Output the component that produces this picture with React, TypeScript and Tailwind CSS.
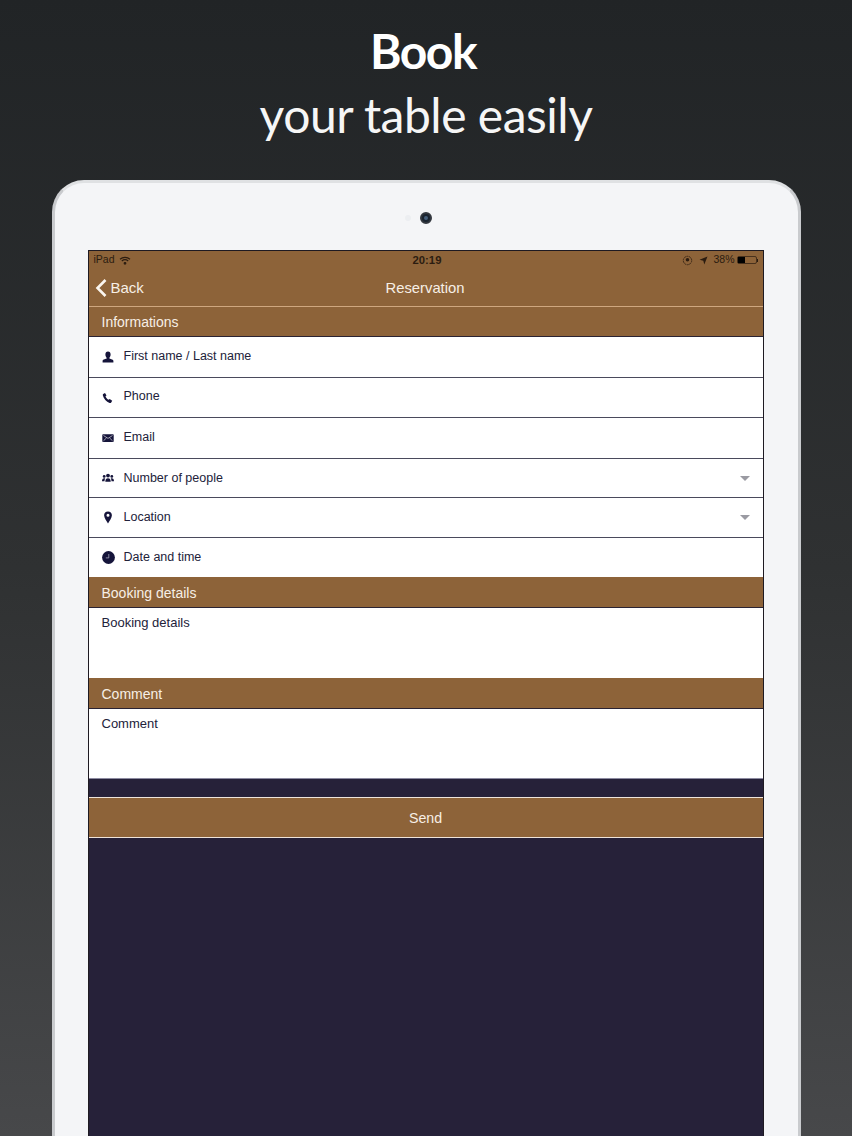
import React from 'react';

const sans = "font-['Liberation_Sans',Arial,sans-serif]";

const UserGlyph = () => (
  <svg width="12" height="12" viewBox="0 0 12 12" fill="#15143a">
    <path d="M6 0.500c1.700 0 2.600 1.200 2.600 2.900 0 1.200-.5 2.300-1.100 3v1.200c0 .5 3.700.9 3.900 2.100v1.800H.6V9.700c.2-1.200 3.900-1.600 3.900-2.100V6.400C3.900 5.700 3.400 4.600 3.400 3.400 3.400 1.700 4.300.5 6 .5z" />
  </svg>
);

const PhoneGlyph = () => (
  <svg width="12" height="12" viewBox="0 0 12 12" fill="#15143a">
    <path d="M1.200 1.900 3 .9l1.500 2.500-1 .8c.4 1.500 1.600 2.900 3.200 3.600l1-.9 2.500 1.900-1 1.700c-.3.500-1 .6-1.600.4C4.300 9.900 1.700 7 .8 3.300c-.1-.6 0-1.100.4-1.400z" />
  </svg>
);

const MailGlyph = () => (
  <svg width="12" height="12" viewBox="0 0 12 12">
    <rect x="0.300" y="2.200" width="11.400" height="7.800" rx="0.800" fill="#15143a" />
    <path d="M1.500 3.500 6 6.400l4.500-2.900M1.500 8.800l3-2.900M10.500 8.800l-3-2.900" stroke="#fff" strokeWidth="0.600" fill="none" />
  </svg>
);

const GroupGlyph = () => (
  <svg width="12" height="12" viewBox="0 0 12 12" fill="#15143a">
    <circle cx="6" cy="3.600" r="1.900" />
    <path d="M3.300 9.800c0-2.500 1-3.600 2.700-3.600s2.700 1.100 2.700 3.600z" />
    <circle cx="2.200" cy="4.400" r="1.400" />
    <path d="M0 9.300c0-2 .8-3 2.200-3 .4 0 .7.100 1 .2-.5.700-.7 1.600-.7 2.800z" />
    <circle cx="9.800" cy="4.400" r="1.400" />
    <path d="M12 9.300c0-2-.8-3-2.200-3-.4 0-.7.100-1 .2.500.7.700 1.600.7 2.800z" />
  </svg>
);

const PinGlyph = () => (
  <svg width="12" height="13" viewBox="0 0 12 13" fill="#15143a">
    <path fillRule="evenodd" d="M6 .4c2.300 0 3.900 1.700 3.900 3.800C9.900 6.800 7.400 10 6 12.600 4.600 10 2.100 6.800 2.100 4.200 2.100 2.100 3.700.4 6 .4zm0 2.300a1.500 1.500 0 1 0 0 3 1.500 1.500 0 0 0 0-3z" />
  </svg>
);

const ClockGlyph = () => (
  <svg width="13" height="13" viewBox="0 0 13 13">
    <circle cx="6.500" cy="6.500" r="6.400" fill="#15143a" />
    <path d="M6.800 3v3.900H3.800" stroke="#b9b9cc" strokeWidth="0.700" fill="none" />
  </svg>
);

const BackChevron = () => (
  <svg width="12" height="18" viewBox="0 0 12 18" fill="none" stroke="#fbf6ef" strokeWidth="2.600">
    <path d="M10.500 1 2.500 9l8 8" />
  </svg>
);

const SectionHeader = ({ label, h }: { label: string; h: string }) => (
  <div className={`${h} bg-[#8d6339] border-b border-[#2a2333] pl-[13px] pt-[2px] flex items-center text-[14px] text-[#f7efe6]`}>
    {label}
  </div>
);

const FieldRow = ({ icon, label, select, last, h, nudge }: { icon: React.ReactNode; label: string; select?: boolean; last?: boolean; h: string; nudge?: string }) => (
  <div className={`${h} bg-white flex items-center pl-[13px] pr-[13px] ${last ? '' : 'border-b border-[#4a4a5c]'}`}>
    <span className="w-[13px] flex justify-center">{icon}</span>
    <span className={`ml-[9px] text-[12.500px] text-[#22223a] ${nudge ?? ''}`}>{label}</span>
    {select && <span className="ml-auto w-0 h-0 border-x-[5px] border-x-transparent border-t-[5px] border-t-[#9a9aa2]" />}
  </div>
);

export default function App() {
  return (
    <div className="w-[852px] h-[1136px] overflow-hidden bg-gradient-to-b from-[#212426] via-[#2f3132] to-[#47484a] flex flex-col items-center">
      <div className="h-[180px] w-full pt-[21px] flex flex-col items-center text-white font-['Lato',sans-serif]">
        <h1 className="text-[48px] leading-[60px] font-bold tracking-[-1.500px] pr-[6px]">Book</h1>
        <p className="text-[48px] leading-[68px] font-normal tracking-[-0.500px] text-[#f6f6f6]">your table easily</p>
      </div>

      <div className="w-[749px] flex-1 rounded-t-[32px] bg-[#f4f5f7] border-t-[3px] border-x-[3px] border-t-[#dfe1e3] border-x-[#c9cbce] flex flex-col items-center">
        <div className="h-[67px] w-full flex items-center justify-center pt-[3px] pr-[16px] gap-[9px]">
          <span className="w-[6px] h-[6px] rounded-full bg-[#eceef1]" />
          <span className="w-[12px] h-[12px] rounded-full bg-[#1a2430] border-[2px] border-[#33383f] flex items-center justify-center">
            <span className="w-[4px] h-[4px] rounded-full bg-[#46607c]" />
          </span>
        </div>

        <div className={`w-[676px] flex-1 mr-[1px] bg-[#262139] border-x border-t border-[#1e1a22] flex flex-col ${sans}`}>
          {/* status bar + nav */}
          <div className="bg-[#8d6339] border-b border-[#cfa77f]">
            <div className="h-[18px] flex items-center px-[5px] text-[10.500px] text-[#2b1c10] relative">
              <span>iPad</span>
              <svg className="ml-[4px]" width="12" height="9" viewBox="0 0 12 9" fill="none" stroke="#2b1c10" strokeWidth="1.200">
                <path d="M1 3.200c2.800-2.400 7.200-2.400 10 0M2.800 5c1.800-1.500 4.600-1.500 6.400 0" />
                <circle cx="6" cy="7.300" r="0.800" fill="#2b1c10" />
              </svg>
              <span className="absolute left-0 right-0 text-center font-bold text-[11.300px] pl-[3px]">20:19</span>
              <span className="ml-auto flex items-center">
                <svg width="11" height="11" viewBox="0 0 11 11" fill="none" stroke="#2b1c10">
                  <circle cx="5.500" cy="5.500" r="4.200" strokeWidth="0.800" strokeDasharray="2 0.600" />
                  <circle cx="5.500" cy="4.800" r="1.800" fill="#2b1c10" stroke="none" />
                </svg>
                <svg className="ml-[6px]" width="9" height="9" viewBox="0 0 9 9" fill="#2b1c10">
                  <path d="M8.500.5 5.300 8.500 4.300 4.700.5 3.700z" />
                </svg>
                <span className="ml-[5px]">38%</span>
                <span className="ml-[2px] w-[20px] h-[8px] border border-[#2b1c10]/70 rounded-[2px] flex">
                  <span className="w-[7px] bg-black" />
                </span>
                <span className="w-[1px] h-[3px] bg-[#2b1c10]" />
              </span>
            </div>
            <div className="h-[37px] flex items-center relative pl-[6px]">
              <BackChevron />
              <span className="ml-[4px] pt-[1px] text-[15px] text-[#f7efe6]">Back</span>
              <span className="absolute left-0 right-0 text-center text-[14.800px] text-[#f7efe6] pr-[1px] pt-[1px]">Reservation</span>
            </div>
          </div>

          <SectionHeader h="h-[30px]" label="Informations" />
          <FieldRow h="h-[41px]" icon={<UserGlyph />} label="First name / Last name" nudge="pb-[2px]" />
          <FieldRow h="h-[40px]" icon={<PhoneGlyph />} label="Phone" nudge="pb-[2px]" />
          <FieldRow h="h-[41px]" icon={<MailGlyph />} label="Email" nudge="pb-[2px]" />
          <FieldRow h="h-[39px]" icon={<GroupGlyph />} label="Number of people" select nudge="pt-[1px]" />
          <FieldRow h="h-[40px]" icon={<PinGlyph />} label="Location" select />
          <FieldRow h="h-[39px]" icon={<ClockGlyph />} label="Date and time" last />

          <SectionHeader h="h-[31px]" label="Booking details" />
          <div className="h-[70px] bg-white pl-[13px] pt-[5px] text-[13px] text-[#22223a]">Booking details</div>
          <SectionHeader h="h-[31px]" label="Comment" />
          <div className="h-[70px] bg-white pl-[13px] pt-[5px] text-[13px] text-[#22223a] border-b border-[#8c8aa0]">Comment</div>

          <div className="mt-[18px] h-[41px] bg-[#8d6339] border-y border-[#efe4da] flex items-center justify-center text-[14.200px] text-[#f7efe6] pt-[3px]">
            Send
          </div>
        </div>
      </div>
    </div>
  );
}
